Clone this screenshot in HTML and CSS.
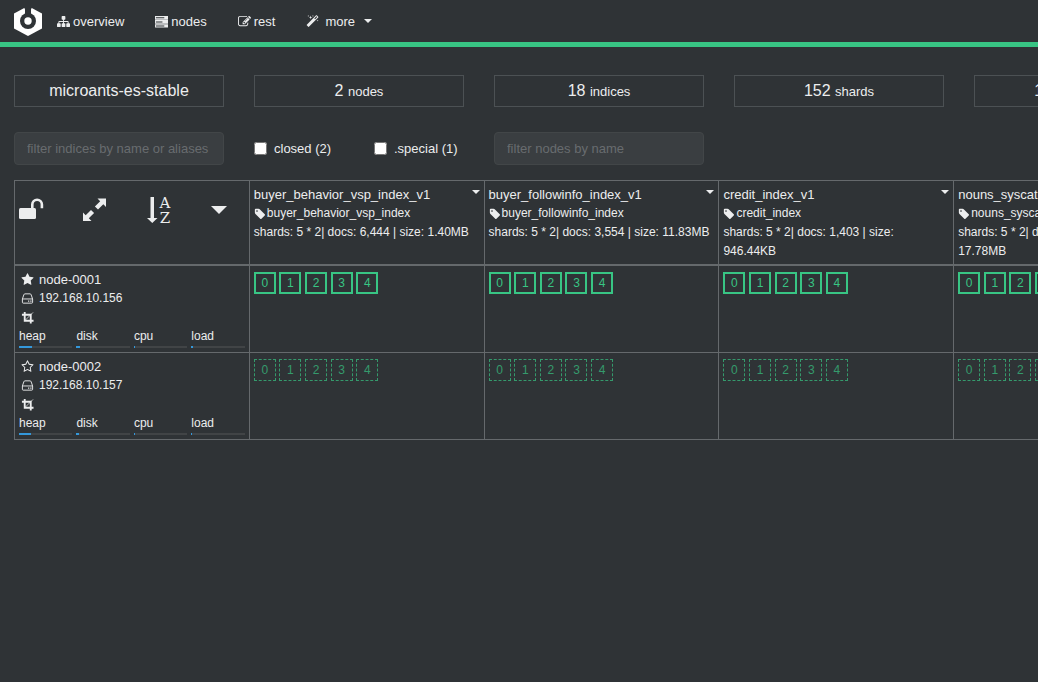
FILE: index.html
```html
<!DOCTYPE html>
<html lang="en">
<head>
<meta charset="utf-8">
<title>cerebro</title>
<link rel="stylesheet" href="styles.css">
</head>
<body>
<svg class="sprite" aria-hidden="true">
  <symbol id="sitemap" viewBox="0 0 1792 1792"><path d="M1792 1248v320q0 40-28 68t-68 28h-320q-40 0-68-28t-28-68v-320q0-40 28-68t68-28h96v-192h-512v192h96q40 0 68 28t28 68v320q0 40-28 68t-68 28h-320q-40 0-68-28t-28-68v-320q0-40 28-68t68-28h96v-192h-512v192h96q40 0 68 28t28 68v320q0 40-28 68t-68 28h-320q-40 0-68-28t-28-68v-320q0-40 28-68t68-28h96v-192q0-52 38-90t90-38h512v-192h-96q-40 0-68-28t-28-68v-320q0-40 28-68t68-28h320q40 0 68 28t28 68v320q0 40-28 68t-68 28h-96v192h512q52 0 90 38t38 90v192h96q40 0 68 28t28 68z"/></symbol>
  <symbol id="server" viewBox="0 0 14 14"><path fill-rule="evenodd" d="M0 1h14v4h-14zM0 5.500h14v4h-14zM0 10h14v3.500h-14zM1 2.500v1h9v-1zM1 7v1h7v-1zM1 11.300v1h9v-1z"/></symbol>
  <symbol id="edit" viewBox="0 0 1792 1792"><path d="M888 1184l116-116-152-152-116 116v56h96v96h56zm440-720q-16-16-33 1l-350 350q-17 17-1 33t33-1l350-350q17-17 1-33zm80 594v190q0 119-84.5 203.5t-203.5 84.5h-832q-119 0-203.5-84.5t-84.5-203.5v-832q0-119 84.5-203.5t203.5-84.5h832q63 0 117 25 15 7 18 23 3 17-9 29l-49 49q-14 14-32 8-23-6-45-6h-832q-66 0-113 47t-47 113v832q0 66 47 113t113 47h832q66 0 113-47t47-113v-126q0-13 9-22l64-64q15-15 35-7t20 29zm-96-738l288 288-672 672h-288v-288zm444 132l-92 92-288-288 92-92q28-28 68-28t68 28l152 152q28 28 28 68t-28 68z"/></symbol>
  <symbol id="magic" viewBox="0 0 1792 1792"><path d="M1254 581l293-293-107-107-293 293zm447-293q0 27-18 45l-1286 1286q-18 18-45 18t-45-18l-198-198q-18-18-18-45t18-45l1286-1286q18-18 45-18t45 18l198 198q18 18 18 45zm-1351-190l98 30-98 30-30 98-30-98-98-30 98-30 30-98zm350 162l196 60-196 60-60 196-60-196-196-60 196-60 60-196zm930 478l98 30-98 30-30 98-30-98-98-30 98-30 30-98zm-640-640l98 30-98 30-30 98-30-98-98-30 98-30 30-98z"/></symbol>
  <symbol id="tag" viewBox="0 0 1792 1792"><path d="M576 448q0-53-37.5-90.5t-90.5-37.5-90.5 37.5-37.5 90.5 37.5 90.5 90.5 37.5 90.5-37.5 37.5-90.5zm1067 576q0 53-37 90l-491 492q-39 37-91 37-53 0-90-37l-715-716q-38-37-64.5-101t-26.5-117v-416q0-52 38-90t90-38h416q53 0 117 26.5t102 64.5l715 714q37 39 37 91z"/></symbol>
  <symbol id="star" viewBox="0 0 1792 1792"><path d="M1728 647q0 22-26 48l-363 354 86 500q1 7 1 20 0 21-10.5 35.5t-30.5 14.5q-19 0-40-12l-449-236-449 236q-22 12-40 12-21 0-31.5-14.5t-10.5-35.5q0-6 2-20l86-500-364-354q-25-27-25-48 0-37 56-46l502-73 225-455q19-41 49-41t49 41l225 455 502 73q56 9 56 46z"/></symbol>
  <symbol id="star-o" viewBox="0 0 1792 1792"><path d="M1201 1004l306-297-422-62-189-382-189 382-422 62 306 297-73 421 378-199 377 199zm527-357q0 22-26 48l-363 354 86 500q1 7 1 20 0 50-41 50-19 0-40-12l-449-236-449 236q-22 12-40 12-21 0-31.5-14.5t-10.5-35.5q0-6 2-20l86-500-364-354q-25-27-25-48 0-37 56-46l502-73 225-455q19-41 49-41t49 41l225 455 502 73q56 9 56 46z"/></symbol>
  <symbol id="hdd" viewBox="0 0 14 14"><path fill="none" stroke="currentColor" d="M1.500 7.500h11v3.600q0 .9-.9.9h-9.200q-.9 0-.9-.9zM1.500 7.500l1.600-4.600q.3-.9 1.200-.9h5.400q.9 0 1.200.9l1.600 4.600"/><path d="M7.600 9.200h1.300v1.300h-1.300zM10 9.200h1.300v1.300h-1.300z"/></symbol>
  <symbol id="crop" viewBox="0 0 14 14"><path fill="none" stroke="currentColor" stroke-width="2" d="M1 4h9.500v9.500M4 1v9.500h9.500"/><path fill="none" stroke="currentColor" stroke-width=".8" d="M4 10.500l9-9"/></symbol>
  <symbol id="caret" viewBox="0 0 8 4"><path d="M0 0h8l-4 4z"/></symbol>
</svg>

<header class="topbar">
  <a class="brand" href="#" aria-label="cerebro">
    <svg class="logo" viewBox="0 0 28 30">
      <path d="M14 0L28 7.500V22.500L14 30 0 22.500V7.500z"/>
      <path class="cut" d="M9.500 0h9L17 3.500V8h-6V3.500z"/>
      <circle class="cut" cx="14" cy="15" r="8"/>
      <circle cx="14" cy="15" r="3.700"/>
    </svg>
  </a>
  <nav class="menu">
    <a href="#"><svg class="icon"><use href="#sitemap"/></svg>overview</a>
    <a href="#"><svg class="icon"><use href="#server"/></svg>nodes</a>
    <a href="#"><svg class="icon"><use href="#edit"/></svg>rest</a>
    <a class="more" href="#"><svg class="icon"><use href="#magic"/></svg>more<svg class="caret"><use href="#caret"/></svg></a>
  </nav>
</header>

<main class="page">
  <section class="grid stats">
    <div class="stat">microants-es-stable</div>
    <div class="stat">2 <small>nodes</small></div>
    <div class="stat">18 <small>indices</small></div>
    <div class="stat">152 <small>shards</small></div>
    <div class="stat">129,374 <small>docs</small></div>
  </section>

  <form class="grid filters">
    <input class="field" type="text" placeholder="filter indices by name or aliases" aria-label="filter indices by name or aliases">
    <div class="checks">
      <label><input type="checkbox">closed (2)</label>
      <label><input type="checkbox">.special (1)</label>
    </div>
    <input class="field" type="text" placeholder="filter nodes by name" aria-label="filter nodes by name">
  </form>

  <table class="shard-map">
    <thead>
      <tr>
        <th>
          <div class="tools">
            <button type="button" aria-label="unlock"><svg class="tool" viewBox="0 0 26 26"><rect x="0" y="11" width="17" height="11" rx="1.500"/><path fill="none" stroke="currentColor" stroke-width="2.600" d="M13.300 11.500V7.500a4.800 4.800 0 0 1 9.600 0V11.200"/></svg></button>
            <button type="button" aria-label="expand"><svg class="tool" viewBox="0 0 26 26"><path d="M14.500 1.500h8.500v8.500l-2.700-2.700-5.300 5.300-3.100-3.100 5.300-5.300zM8.500 24H0v-8.500l2.700 2.700 5.300-5.300 3.100 3.100-5.300 5.300z"/></svg></button>
            <button type="button" aria-label="sort by name"><svg class="tool" viewBox="0 0 26 26"><path d="M3.500 0h3.500v21h3.500l-5.250 5-5.250-5h3.500z"/><text class="letter" x="18" y="11">A</text><text class="letter" x="18" y="26">Z</text></svg></button>
            <button type="button" aria-label="options"><svg class="tool-caret"><use href="#caret"/></svg></button>
          </div>
        </th>
        <th>
          <div class="name">buyer_behavior_vsp_index_v1<button type="button" aria-label="index actions"><svg class="caret"><use href="#caret"/></svg></button></div>
          <div class="alias"><svg class="icon"><use href="#tag"/></svg>buyer_behavior_vsp_index</div>
          <div class="info">shards: 5 * 2| docs: 6,444 | size: 1.40MB</div>
        </th>
        <th>
          <div class="name">buyer_followinfo_index_v1<button type="button" aria-label="index actions"><svg class="caret"><use href="#caret"/></svg></button></div>
          <div class="alias"><svg class="icon"><use href="#tag"/></svg>buyer_followinfo_index</div>
          <div class="info">shards: 5 * 2| docs: 3,554 | size: 11.83MB</div>
        </th>
        <th>
          <div class="name">credit_index_v1<button type="button" aria-label="index actions"><svg class="caret"><use href="#caret"/></svg></button></div>
          <div class="alias"><svg class="icon"><use href="#tag"/></svg>credit_index</div>
          <div class="info">shards: 5 * 2| docs: 1,403 | size: 946.44KB</div>
        </th>
        <th>
          <div class="name">nouns_syscate_index_v1<button type="button" aria-label="index actions"><svg class="caret"><use href="#caret"/></svg></button></div>
          <div class="alias"><svg class="icon"><use href="#tag"/></svg>nouns_syscate_index</div>
          <div class="info">shards: 5 * 2| docs: 38,120 | size: 17.78MB</div>
        </th>
      </tr>
    </thead>
    <tbody>
      <tr>
        <td>
          <div class="node"><svg class="icon"><use href="#star"/></svg>node-0001</div>
          <div class="node address"><svg class="icon"><use href="#hdd"/></svg>192.168.10.156</div>
          <div class="node"><svg class="icon"><use href="#crop"/></svg></div>
          <div class="meters">
            <div>heap<div class="bar"><div class="fill" style="width:24%"></div></div></div>
            <div>disk<div class="bar"><div class="fill" style="width:6%"></div></div></div>
            <div>cpu<div class="bar"><div class="fill" style="width:2%"></div></div></div>
            <div>load<div class="bar"><div class="fill" style="width:4%"></div></div></div>
          </div>
        </td>
        <td><span class="shard">0</span> <span class="shard">1</span> <span class="shard">2</span> <span class="shard">3</span> <span class="shard">4</span></td>
        <td><span class="shard">0</span> <span class="shard">1</span> <span class="shard">2</span> <span class="shard">3</span> <span class="shard">4</span></td>
        <td><span class="shard">0</span> <span class="shard">1</span> <span class="shard">2</span> <span class="shard">3</span> <span class="shard">4</span></td>
        <td><span class="shard">0</span> <span class="shard">1</span> <span class="shard">2</span> <span class="shard">3</span> <span class="shard">4</span></td>
      </tr>
      <tr>
        <td>
          <div class="node"><svg class="icon"><use href="#star-o"/></svg>node-0002</div>
          <div class="node address"><svg class="icon"><use href="#hdd"/></svg>192.168.10.157</div>
          <div class="node"><svg class="icon"><use href="#crop"/></svg></div>
          <div class="meters">
            <div>heap<div class="bar"><div class="fill" style="width:22%"></div></div></div>
            <div>disk<div class="bar"><div class="fill" style="width:4%"></div></div></div>
            <div>cpu<div class="bar"><div class="fill" style="width:2%"></div></div></div>
            <div>load<div class="bar"><div class="fill" style="width:2%"></div></div></div>
          </div>
        </td>
        <td><span class="shard replica">0</span> <span class="shard replica">1</span> <span class="shard replica">2</span> <span class="shard replica">3</span> <span class="shard replica">4</span></td>
        <td><span class="shard replica">0</span> <span class="shard replica">1</span> <span class="shard replica">2</span> <span class="shard replica">3</span> <span class="shard replica">4</span></td>
        <td><span class="shard replica">0</span> <span class="shard replica">1</span> <span class="shard replica">2</span> <span class="shard replica">3</span> <span class="shard replica">4</span></td>
        <td><span class="shard replica">0</span> <span class="shard replica">1</span> <span class="shard replica">2</span> <span class="shard replica">3</span> <span class="shard replica">4</span></td>
      </tr>
    </tbody>
  </table>
</main>
</body>
</html>
```
FILE: styles.css
```css
* { box-sizing: border-box; }

body {
  margin: 0;
  min-height: 100vh;
  overflow-x: hidden;
  background: #2f3336;
  color: #ecedee;
  font: 13px/19px "Liberation Sans", Arial, sans-serif;
}

button {
  padding: 0;
  border: 0;
  background: none;
  color: inherit;
  display: flex;
  cursor: pointer;
}

svg { fill: currentColor; flex: none; }
.sprite { position: absolute; width: 0; height: 0; }
.icon { width: 14px; height: 14px; }
.caret { width: 8px; height: 4px; }

.topbar {
  display: flex;
  align-items: center;
  height: 47px;
  padding-left: 14px;
  border-bottom: 5px solid #38c584;
}
.brand { display: flex; color: #fff; }
.logo { width: 28px; height: 30px; }
.cut { fill: #2f3336; }
.menu { display: flex; }
.menu a {
  display: flex;
  align-items: center;
  gap: 3px;
  padding: 0 15px;
  color: inherit;
  text-decoration: none;
}
.menu .icon { width: 13px; height: 13px; }
.menu a + a { padding-left: 16px; }
.menu .more { gap: 6px; }
.more .caret { margin-left: 3px; }

.page { padding: 28px 14px; }
.grid {
  display: grid;
  grid-template-columns: repeat(5, 210px);
  gap: 30px;
}
.stats { margin-bottom: 25px; }
.stat {
  height: 32px;
  border: 1px solid #4c5154;
  font-size: 16px;
  line-height: 30px;
  text-align: center;
  white-space: nowrap;
}
.stat small { font-size: 13px; }

.filters { margin-bottom: 15px; }
.field {
  width: 100%;
  height: 33px;
  padding: 0 12px;
  border: 1px solid #424648;
  border-radius: 4px;
  background: #3a3e41;
  color: inherit;
  font: inherit;
}
.field::placeholder { color: #686c6f; }
.checks { display: flex; align-items: center; }
.checks label { display: flex; align-items: center; gap: 7px; flex: none; width: 120px; }
.checks input { margin: 0; width: 13px; height: 13px; flex: none; }

.shard-map {
  width: 1175px;
  table-layout: fixed;
  border-collapse: collapse;
}
.shard-map th,
.shard-map td {
  padding: 4px;
  border: 1px solid #65696c;
  font-weight: normal;
  text-align: left;
  vertical-align: top;
}
.shard-map th { border-bottom-width: 2px; padding-bottom: 3px; }

.tools {
  display: grid;
  grid-template-columns: 64px 64px 64px auto;
  align-items: center;
  padding-top: 12px;
}
.tool { width: 26px; height: 26px; }
.tool-caret { width: 16px; height: 8px; }
.letter {
  font: 15px "DejaVu Serif", serif;
  text-anchor: middle;
}

.name { display: flex; justify-content: space-between; align-items: flex-start; }
.name button { padding-top: 5px; }
.alias { display: flex; align-items: center; gap: 1px; font-size: 12px; }
.alias .icon { width: 12px; height: 12px; }
.info { font-size: 12px; }

.node { display: flex; align-items: center; gap: 5px; height: 19px; padding-left: 2px; }
.node .icon { width: 13px; height: 13px; }
.address { font-size: 12px; }
.meters { display: grid; grid-template-columns: repeat(4, 1fr); gap: 4px; font-size: 12px; }
.bar { height: 2px; background: #414446; }
.fill { height: 2px; background: #3498db; }

.shard {
  display: inline-block;
  width: 22px;
  height: 22px;
  margin-top: 2px;
  border: 2px solid #38c584;
  color: #38c584;
  font-size: 12px;
  line-height: 18px;
  text-align: center;
}
.replica {
  border: 1px dashed;
  line-height: 20px;
  opacity: .7;
}
```
